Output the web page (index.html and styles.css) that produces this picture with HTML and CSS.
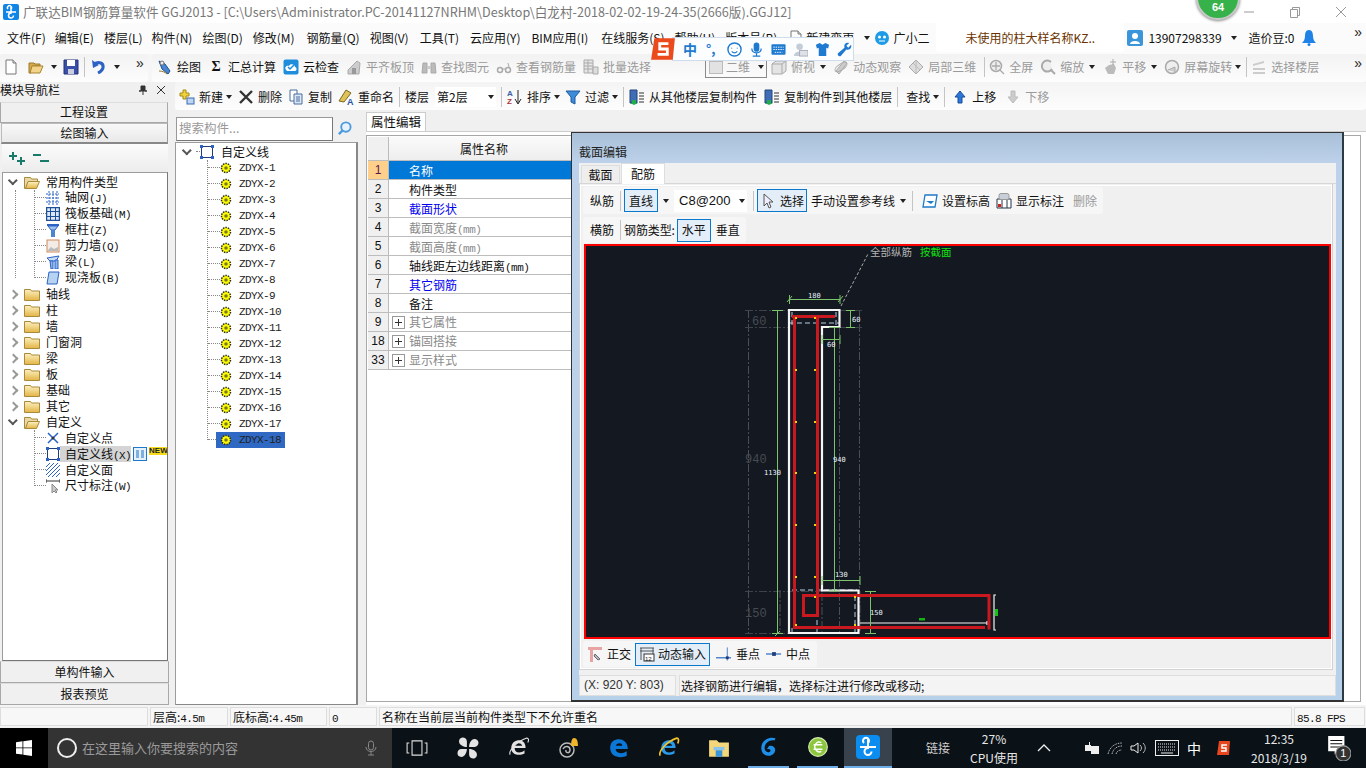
FILE: index.html
```html
<!DOCTYPE html>
<html lang="zh">
<head>
<meta charset="utf-8">
<title>GGJ2013</title>
<link rel="stylesheet" href="styles.css">
</head>
<body>
<svg class="defs" width="0" height="0">
<defs>
<symbol id="doc" viewBox="0 0 16 16"><path d="M3 1h7l3 3v11H3z" fill="#fff" stroke="#777"/><path d="M10 1v3h3" fill="#ddd" stroke="#777"/></symbol>
<symbol id="open" viewBox="0 0 16 16"><path d="M1 4h5l1 1h5v2H5L3 14H1z" fill="#d7a84a" stroke="#9a7a2c"/><path d="M4 7h11l-3 7H2z" fill="#f2d389" stroke="#a98530"/></symbol>
<symbol id="save" viewBox="0 0 16 16"><path d="M1 1h14v14H1z" fill="#3a4fa8" stroke="#223078"/><path d="M4 1h8v6H4z" fill="#fff"/><path d="M5 10h6v5H5z" fill="#c8cde0"/></symbol>
<symbol id="undo" viewBox="0 0 16 16"><path d="M3 5c5-3 10-1 9 4-1 3-3 4-5 5" fill="none" stroke="#2c62c6" stroke-width="3"/><path d="M1 1l1 8 6-3z" fill="#2c62c6"/></symbol>
<symbol id="pen" viewBox="0 0 16 16"><path d="M2 2l6 3 5 7-2 3-6-5z" fill="#4a86d0" stroke="#1f4f94"/><path d="M2 12c3 0 6 1 8 3" fill="none" stroke="#9a7a2c"/><circle cx="5" cy="4" r="2" fill="#eee" stroke="#777"/></symbol>
<symbol id="cloud" viewBox="0 0 16 16"><rect x="0.5" y="0.5" width="15" height="15" rx="2" fill="#1d8ddc"/><path d="M3 11c-2-3 1-5 3-4 1-3 6-2 6 1 2 0 2 4 0 4H4z" fill="#fff"/><path d="M5 8l2 2 4-4" fill="none" stroke="#1d8ddc" stroke-width="1.5"/></symbol>
<symbol id="align" viewBox="0 0 16 16"><path d="M2 11l9-9 3 2-1 11H2z" fill="#ccc" stroke="#aaa"/><path d="M6 9h4v6H6z" fill="#999"/></symbol>
<symbol id="binoc" viewBox="0 0 16 16"><path d="M2 4h4v10H1zM10 4h4l1 10h-5z" fill="#bbb" stroke="#aaa"/><path d="M6 7h4v3H6z" fill="#ccc"/></symbol>
<symbol id="glass" viewBox="0 0 16 16"><circle cx="4" cy="11" r="2.5" fill="none" stroke="#aaa" stroke-width="1.5"/><circle cx="12" cy="11" r="2.5" fill="none" stroke="#aaa" stroke-width="1.5"/><path d="M7 10h2M13 8l-1-4" stroke="#aaa"/></symbol>
<symbol id="batch" viewBox="0 0 16 16"><path d="M1 1h9v13H1z" fill="#e6e6e6" stroke="#aaa"/><path d="M1 4h9M1 7h9M1 10h9M5 1v13M10 8h5v7h-5z" fill="#ddd" stroke="#aaa"/></symbol>
<symbol id="box2" viewBox="0 0 16 16"><rect x="1.5" y="2.5" width="13" height="12" fill="#e2e2e2" stroke="#bbb"/></symbol>
<symbol id="box3" viewBox="0 0 16 16"><path d="M1 5l4-3h10v10l-4 3H1z" fill="#e4e4e4" stroke="#aaa"/><path d="M1 5h10v10M11 5l4-3" fill="none" stroke="#aaa"/></symbol>
<symbol id="orbit" viewBox="0 0 16 16"><path d="M3 12l8-10 3 2-8 11z" fill="#ccc" stroke="#aaa"/><ellipse cx="8" cy="8" rx="7" ry="3" fill="none" stroke="#aaa" transform="rotate(-35 8 8)"/></symbol>
<symbol id="part3" viewBox="0 0 16 16"><path d="M8 1l7 7-7 7-7-7z" fill="#ddd" stroke="#aaa"/><path d="M5 4l7 7M8 1v14" stroke="#bbb"/></symbol>
<symbol id="zoomf" viewBox="0 0 16 16"><circle cx="7" cy="7" r="5.5" fill="#eee" stroke="#aaa" stroke-width="1.5"/><path d="M7 3v8M3 7h8M11 11l4 4" stroke="#aaa" stroke-width="1.3"/></symbol>
<symbol id="zoomc" viewBox="0 0 16 16"><path d="M11 3a5.5 5.5 0 1 0 1 7" fill="#eee" stroke="#aaa" stroke-width="2"/><path d="M11 11l4 4" stroke="#aaa" stroke-width="2"/></symbol>
<symbol id="pan" viewBox="0 0 16 16"><path d="M3 9l4-3 5-1 2 4-2 6H6z" fill="#bbb"/><path d="M11 0v6M8 3h6" stroke="#aaa"/></symbol>
<symbol id="rot" viewBox="0 0 16 16"><circle cx="8" cy="8" r="6.5" fill="#eee" stroke="#aaa" stroke-width="1.5"/><path d="M4 11l7-3v5" fill="#ccc" stroke="#aaa"/></symbol>
<symbol id="layers" viewBox="0 0 16 16"><path d="M2 5l11-3v2L2 7zM2 9h12v2H2zM2 13h12v2H2z" fill="#ccc"/></symbol>
<symbol id="newp" viewBox="0 0 16 16"><path d="M4 1h3v3h3v3H7v3H4V7H1V4h3z" fill="#f2d23f" stroke="#a38a12"/><rect x="8" y="9" width="7" height="6" fill="#bcd5f2" stroke="#3a6ab0"/></symbol>
<symbol id="del" viewBox="0 0 16 16"><path d="M2 2l12 12M14 2L2 14" stroke="#333" stroke-width="2.4"/></symbol>
<symbol id="copy" viewBox="0 0 16 16"><path d="M2 1h7v11H2z" fill="#fff" stroke="#4a6c9e"/><path d="M6 5h8v10H6z" fill="#dde8f6" stroke="#4a6c9e"/><path d="M8 8h4M8 10h4M8 12h4" stroke="#4a6c9e"/></symbol>
<symbol id="ren" viewBox="0 0 16 16"><path d="M1 12l7-11 5 3-7 9z" fill="#e1c25a" stroke="#7a6a20"/><text x="9" y="15.5" font-size="9" font-weight="700" fill="#1e55a8" font-family="Liberation Sans">A</text></symbol>
<symbol id="sort" viewBox="0 0 16 16"><text x="0" y="7" font-size="8" font-weight="700" fill="#3a5fa8" font-family="Liberation Sans">A</text><text x="0" y="15" font-size="8" font-weight="700" fill="#a33" font-family="Liberation Sans">Z</text><path d="M11 1v13M8 10l3 5 3-5" fill="none" stroke="#222"/></symbol>
<symbol id="filter" viewBox="0 0 16 16"><path d="M1 2h14L10 8v7l-4-2V8z" fill="#3e8bd8" stroke="#1e5aa0"/></symbol>
<symbol id="cfrom" viewBox="0 0 16 16"><path d="M1 1h7v13H1z" fill="#3e6db6" stroke="#24477c"/><path d="M3 11h4v3h2l-4 2-4-2h2z" fill="#1fae4b"/><path d="M10 4h5M10 7h5M10 10h5M10 13h5" stroke="#333" stroke-width="1.2"/></symbol>
<symbol id="up" viewBox="0 0 16 16"><path d="M8 2l5 6h-3v6H6V8H3z" fill="#2a77d8" stroke="#1b4f9c"/></symbol>
<symbol id="down" viewBox="0 0 16 16"><path d="M8 14l5-6h-3V2H6v6H3z" fill="#ccc" stroke="#bbb"/></symbol>
<symbol id="folder" viewBox="0 0 16 16"><path d="M0.5 3.5h6l1 1.5h8v9.5H0.5z" fill="url(#fg)" stroke="#a88a3a"/></symbol>
<symbol id="fopen" viewBox="0 0 16 16"><path d="M0.5 3.5h6l1 1.5h6v3H4l-2 6.500H0.500z" fill="#ead8a6" stroke="#a88a3a"/><path d="M4 7.500h11.500l-3 7H1.500z" fill="url(#fg)" stroke="#a88a3a"/></symbol>
<linearGradient id="fg" x1="0" y1="0" x2="0" y2="1"><stop offset="0" stop-color="#fdf2c4"/><stop offset="1" stop-color="#e2b445"/></linearGradient>
<symbol id="grid" viewBox="0 0 14 14"><path d="M0 3h13M0 7h13M0 11h13M3 0v14M7 0v14M11 0v14" stroke="#2c62c6" stroke-dasharray="2 1"/></symbol>
<symbol id="raft" viewBox="0 0 14 14"><rect x="0.500" y="0.500" width="13" height="13" fill="#dce8f6" stroke="#1f4f94" stroke-width="1.500"/><path d="M0 4.500h14M0 9.500h14M4.500 0v14M9.500 0v14" stroke="#1f4f94"/></symbol>
<symbol id="col" viewBox="0 0 14 14"><path d="M1 1h12v2H1z" fill="#2c62c6"/><path d="M2 3h10l-3 4H5z" fill="#9fc2ea" stroke="#2c62c6"/><path d="M5 7h4v7H5z" fill="#4a86d0"/></symbol>
<symbol id="wall" viewBox="0 0 14 14"><rect x="1" y="1" width="12" height="12" fill="#f3ece6" stroke="#d08a5a"/><path d="M2 11l3-3 3 2 4-2v4H2z" fill="#bbb"/></symbol>
<symbol id="beam" viewBox="0 0 14 14"><path d="M1 3l12-2-3 5H4z" fill="#c9dff5" stroke="#2c62c6"/><path d="M4 6h3v8H5zM9 5h3v9H9z" fill="#8fb8e8" stroke="#2c62c6"/></symbol>
<symbol id="slab" viewBox="0 0 14 14"><path d="M3 1h10l-2 12H1z" fill="#b7d3f2" stroke="#2c62c6"/></symbol>
<symbol id="pt" viewBox="0 0 14 14"><path d="M2 2l10 10M12 2L2 12" stroke="#2c62c6" stroke-width="1.500"/><circle cx="7" cy="7" r="1.500" fill="#333"/></symbol>
<symbol id="sq" viewBox="0 0 14 14"><rect x="1.500" y="1.500" width="11" height="11" fill="none" stroke="#1f3d7a"/><path d="M0 0h3v3H0zM11 0h3v3h-3zM0 11h3v3H0zM11 11h3v3h-3z" fill="#2c62c6"/></symbol>
<symbol id="hatch" viewBox="0 0 14 14"><path d="M0 4l4-4M0 8l8-8M0 12L12 0M2 14L14 2M6 14l8-8M10 14l4-4" stroke="#2c62c6"/></symbol>
<symbol id="dim" viewBox="0 0 14 14"><path d="M0 2h14M0 0v4M14 0v4" stroke="#333"/><path d="M6 5v9l2-2 2 2 1-1-2-2h3z" fill="#ccc" stroke="#888"/></symbol>
<symbol id="gear" viewBox="0 0 12 12"><circle cx="6" cy="6" r="4.500" fill="#ff0" stroke="#2b2b20" stroke-width="1.500" stroke-dasharray="1.500 1"/><circle cx="6" cy="6" r="1.800" fill="#7d7a20"/></symbol>
<symbol id="cursor" viewBox="0 0 16 16"><path d="M4 1v12l3-3 2 5 2-1-2-5h4z" fill="#eef" stroke="#555"/></symbol>
<symbol id="setel" viewBox="0 0 16 16"><path d="M3 2h12l-2 12H1z" fill="#fff" stroke="#1e7ac8" stroke-width="1.300"/><path d="M4 8h8l-3 3z" fill="#1e7ac8"/></symbol>
<symbol id="show" viewBox="0 0 16 16"><path d="M1 6h14v9H1z" fill="#fff" stroke="#234"/><path d="M6 6v9M11 6v9" stroke="#234"/><rect x="3" y="0.500" width="10" height="6" rx="2" fill="#c9cfd8" stroke="#999"/><rect x="2" y="11" width="3" height="3" fill="#c22"/></symbol>
<symbol id="ortho" viewBox="0 0 16 16"><path d="M1 1h14v3H6v12H3V4H1z" fill="#e8a3a3"/><path d="M8 8l5 5-2 1-4-4z" fill="#bbb" stroke="#667"/></symbol>
<symbol id="dyn" viewBox="0 0 16 16"><path d="M1 2h14M1 5h14M2 2v12M14 2v12" stroke="#555"/><rect x="5" y="8" width="10" height="7" fill="#fff" stroke="#333"/><text x="6" y="14.500" font-size="6" fill="#111" font-family="Liberation Sans">12</text></symbol>
<symbol id="perp" viewBox="0 0 17 16"><path d="M0 12h16" stroke="#4a7fc8" stroke-width="1.500"/><path d="M12 1v14" stroke="#4a7fc8"/><rect x="10.500" y="10.500" width="3" height="3" fill="#1f3d7a"/></symbol>
<symbol id="midp" viewBox="0 0 17 16"><path d="M0 8h16" stroke="#4a7fc8" stroke-width="1.500"/><rect x="6.500" y="6" width="4" height="4" fill="#1f3d7a"/></symbol>
</defs>
</svg>

<header class="title">
  <svg class="app" viewBox="0 0 16 16"><rect width="16" height="16" rx="2" fill="#0f86e6"/><path d="M8 3v6a2.500 2.500 0 1 0 2.500 2.500M3 8h10M5 5a2 2 0 1 1 3 0" fill="none" stroke="#fff" stroke-width="1.500"/></svg>
  <span class="title-t">广联达BIM钢筋算量软件 GGJ2013 - [C:\Users\Administrator.PC-20141127NRHM\Desktop\白龙村-2018-02-02-19-24-35(2666版).GGJ12]</span>
  <div class="winbtns">
    <svg viewBox="0 0 12 12"><path d="M1 6h10" stroke="#999"/></svg>
    <svg viewBox="0 0 12 12"><path d="M1.500 3.500h7v8h-7zM3.500 3.500v-2h7v8h-2" fill="none" stroke="#999"/></svg>
    <svg viewBox="0 0 12 12"><path d="M1 1l10 10M11 1L1 11" stroke="#999"/></svg>
  </div>
</header>

<nav class="menu">
  <span class="mi">文件(F)</span><span class="mi">编辑(E)</span><span class="mi">楼层(L)</span><span class="mi">构件(N)</span><span class="mi">绘图(D)</span><span class="mi">修改(M)</span><span class="mi">钢筋量(Q)</span><span class="mi">视图(V)</span><span class="mi">工具(T)</span><span class="mi">云应用(Y)</span><span class="mi">BIM应用(I)</span><span class="mi">在线服务(S)</span><span class="mi">帮助(H)</span><span class="mi">版本号(B)</span>
  <span class="mi newchg"><svg class="ic"><use href="#doc"/></svg>新建变更<i class="car"></i></span>
  <span class="mi xiao"><svg class="ic" viewBox="0 0 16 16"><circle cx="8" cy="8" r="7" fill="#1d9be6"/><circle cx="5.500" cy="7" r="1.500" fill="#fff"/><circle cx="10.500" cy="7" r="1.500" fill="#fff"/><path d="M5 11h6" stroke="#fff"/></svg>广小二</span>
  <span class="notice">未使用的柱大样名称KZ..</span>
  <svg class="ic user" viewBox="0 0 16 16"><rect width="16" height="16" rx="2" fill="#3a96d8"/><circle cx="8" cy="6" r="3" fill="#fff"/><path d="M3 14c0-4 10-4 10 0z" fill="#fff"/></svg>
  <span class="phone">13907298339</span><i class="car"></i>
  <span class="beans">造价豆:0</span>
  <svg class="ic bell" viewBox="0 0 16 16"><path d="M8 0c3 0 4 3 4 6s1 5 3 7H1c2-2 3-4 3-7s1-6 4-6z" fill="#1e82e6"/><circle cx="8" cy="14.500" r="1.500" fill="#1e82e6"/></svg>
  <span class="more more-r">»</span>
</nav>

<div class="tools">
  <div class="band band-l">
    <svg class="ic"><use href="#doc"/></svg>
    <svg class="ic"><use href="#open"/></svg><i class="car"></i>
    <svg class="ic"><use href="#save"/></svg>
    <span class="sep"></span>
    <svg class="ic"><use href="#undo"/></svg><i class="car"></i>
    <span class="more">»</span>
  </div>
  <div class="band band-r">
    <span class="ti"><svg class="ic"><use href="#pen"/></svg>绘图</span>
    <span class="ti"><b class="sigma">Σ</b>汇总计算</span>
    <span class="ti"><svg class="ic"><use href="#cloud"/></svg>云检查</span>
    <span class="ti off"><svg class="ic"><use href="#align"/></svg>平齐板顶</span>
    <span class="ti off"><svg class="ic"><use href="#binoc"/></svg>查找图元</span>
    <span class="ti off"><svg class="ic"><use href="#glass"/></svg>查看钢筋量</span>
    <span class="ti off"><svg class="ic"><use href="#batch"/></svg>批量选择</span>
    <span class="combo2d off"><svg class="ic"><use href="#box2"/></svg>二维<i class="car"></i></span>
    <span class="ti off tight"><svg class="ic"><use href="#box3"/></svg>俯视</span><i class="car"></i>
    <span class="ti off"><svg class="ic"><use href="#orbit"/></svg>动态观察</span>
    <span class="ti off"><svg class="ic"><use href="#part3"/></svg>局部三维</span>
    <span class="sep"></span>
    <span class="ti off tight"><svg class="ic"><use href="#zoomf"/></svg>全屏</span>
    <span class="ti off"><svg class="ic"><use href="#zoomc"/></svg>缩放</span><i class="car"></i>
    <span class="ti off"><svg class="ic"><use href="#pan"/></svg>平移</span><i class="car"></i>
    <span class="ti off"><svg class="ic"><use href="#rot"/></svg>屏幕旋转</span><i class="car car-n"></i>
    <span class="sep"></span>
    <span class="ti off tight"><svg class="ic"><use href="#layers"/></svg>选择楼层</span>
    <span class="more more-r">»</span>
  </div>
</div>

<div class="work">
  <aside class="nav">
    <div class="nav-h"><span>模块导航栏</span><span class="pin">
      <svg viewBox="0 0 10 10"><path d="M3 1h4v5h2H1h2zM5 6v4" fill="#333" stroke="#333"/></svg>
      <svg viewBox="0 0 10 10"><path d="M1 1l8 8M9 1L1 9" stroke="#333"/></svg></span></div>
    <div class="nbtn">工程设置</div>
    <div class="nbtn nbtn-on">绘图输入</div>
    <div class="nav-tb">
      <svg viewBox="0 0 16 14"><path d="M3 1h2v3h3v2H5v3H3V6H0V4h3zM11 6h2v3h3v2h-3v3h-2v-3H8V9h3z" fill="#1a7a6a"/></svg>
      <svg viewBox="0 0 16 14"><path d="M0 3h8v2H0zM7 9h9v2H7z" fill="#1a7a6a"/></svg>
    </div>
    <div class="treebox navtree">
      <div class="r"><i class="chev dn"></i><svg class="fd"><use href="#fopen"/></svg><span>常用构件类型</span></div>
      <div class="g1"><div class="g2">
        <div class="r"><i class="cn"></i><svg class="tic"><use href="#grid"/></svg><span>轴网<em>(J)</em></span></div>
        <div class="r"><i class="cn"></i><svg class="tic"><use href="#raft"/></svg><span>筏板基础<em>(M)</em></span></div>
        <div class="r"><i class="cn"></i><svg class="tic"><use href="#col"/></svg><span>框柱<em>(Z)</em></span></div>
        <div class="r"><i class="cn"></i><svg class="tic"><use href="#wall"/></svg><span>剪力墙<em>(Q)</em></span></div>
        <div class="r"><i class="cn"></i><svg class="tic"><use href="#beam"/></svg><span>梁<em>(L)</em></span></div>
        <div class="r"><i class="cn"></i><svg class="tic"><use href="#slab"/></svg><span>现浇板<em>(B)</em></span></div>
      </div></div>
      <div class="r"><i class="chev"></i><svg class="fd"><use href="#folder"/></svg><span>轴线</span></div>
      <div class="r"><i class="chev"></i><svg class="fd"><use href="#folder"/></svg><span>柱</span></div>
      <div class="r"><i class="chev"></i><svg class="fd"><use href="#folder"/></svg><span>墙</span></div>
      <div class="r"><i class="chev"></i><svg class="fd"><use href="#folder"/></svg><span>门窗洞</span></div>
      <div class="r"><i class="chev"></i><svg class="fd"><use href="#folder"/></svg><span>梁</span></div>
      <div class="r"><i class="chev"></i><svg class="fd"><use href="#folder"/></svg><span>板</span></div>
      <div class="r"><i class="chev"></i><svg class="fd"><use href="#folder"/></svg><span>基础</span></div>
      <div class="r"><i class="chev"></i><svg class="fd"><use href="#folder"/></svg><span>其它</span></div>
      <div class="r"><i class="chev dn"></i><svg class="fd"><use href="#fopen"/></svg><span>自定义</span></div>
      <div class="g3">
        <div class="r"><i class="cn"></i><svg class="tic"><use href="#pt"/></svg><span>自定义点</span></div>
        <div class="r hl"><i class="cn"></i><svg class="tic"><use href="#sq"/></svg><span class="hlt">自定义线<em>(X)</em></span><svg class="tic list" viewBox="0 0 14 14"><rect x="0.500" y="0.500" width="13" height="13" fill="#e5f1fb" stroke="#1e7ac8"/><path d="M3 3h3v8H3zM8 3h3v8H8z" fill="#7fb0e0"/></svg><span class="newtag">NEW</span></div>
        <div class="r"><i class="cn"></i><svg class="tic"><use href="#hatch"/></svg><span>自定义面</span></div>
        <div class="r"><i class="cn"></i><svg class="tic"><use href="#dim"/></svg><span>尺寸标注<em>(W)</em></span></div>
      </div>
    </div>
    <div class="nbtn nbtn-b">单构件输入</div>
    <div class="nbtn nbtn-b">报表预览</div>
  </aside>

  <div class="right">
    <div class="tb2">
      <span class="ti"><svg class="ic"><use href="#newp"/></svg>新建</span><i class="car car-n"></i>
      <span class="ti"><svg class="ic"><use href="#del"/></svg>删除</span>
      <span class="ti"><svg class="ic"><use href="#copy"/></svg>复制</span>
      <span class="ti"><svg class="ic"><use href="#ren"/></svg>重命名</span>
      <span class="sep"></span>
      <span class="floorlab">楼层</span>
      <span class="floorsel">第2层<i class="car"></i></span>
      <span class="sep"></span>
      <span class="ti tight"><svg class="ic"><use href="#sort"/></svg>排序</span><i class="car car-n"></i>
      <span class="ti tight2"><svg class="ic"><use href="#filter"/></svg>过滤</span><i class="car car-n"></i>
      <span class="sep"></span>
      <span class="ti tight"><svg class="ic"><use href="#cfrom"/></svg>从其他楼层复制构件</span>
      <span class="ti"><svg class="ic"><use href="#cfrom"/></svg>复制构件到其他楼层</span>
      <span class="sep"></span>
      <span class="find">查找</span><i class="car car-n"></i>
      <span class="sep"></span>
      <span class="ti tight moveup"><svg class="ic"><use href="#up"/></svg>上移</span>
      <span class="ti off"><svg class="ic"><use href="#down"/></svg>下移</span>
    </div>
    <div class="panes">
      <section class="comp">
        <div class="search"><span class="sbox">搜索构件...</span>
          <svg class="sbtn" viewBox="0 0 16 16"><circle cx="9.500" cy="6.500" r="5" fill="#e8f2fb" stroke="#4a9be0" stroke-width="2"/><path d="M6 10l-4 4" stroke="#4a9be0" stroke-width="2.500"/></svg></div>
        <div class="treebox ctree">
          <div class="r"><i class="chev dn"></i><i class="cn2"></i><svg class="tic"><use href="#sq"/></svg><span class="croot">自定义线</span></div>
          <div class="g4">
            <div class="r"><i class="cn"></i><svg class="gr"><use href="#gear"/></svg><span class="zd">ZDYX-1</span></div>
            <div class="r"><i class="cn"></i><svg class="gr"><use href="#gear"/></svg><span class="zd">ZDYX-2</span></div>
            <div class="r"><i class="cn"></i><svg class="gr"><use href="#gear"/></svg><span class="zd">ZDYX-3</span></div>
            <div class="r"><i class="cn"></i><svg class="gr"><use href="#gear"/></svg><span class="zd">ZDYX-4</span></div>
            <div class="r"><i class="cn"></i><svg class="gr"><use href="#gear"/></svg><span class="zd">ZDYX-5</span></div>
            <div class="r"><i class="cn"></i><svg class="gr"><use href="#gear"/></svg><span class="zd">ZDYX-6</span></div>
            <div class="r"><i class="cn"></i><svg class="gr"><use href="#gear"/></svg><span class="zd">ZDYX-7</span></div>
            <div class="r"><i class="cn"></i><svg class="gr"><use href="#gear"/></svg><span class="zd">ZDYX-8</span></div>
            <div class="r"><i class="cn"></i><svg class="gr"><use href="#gear"/></svg><span class="zd">ZDYX-9</span></div>
            <div class="r"><i class="cn"></i><svg class="gr"><use href="#gear"/></svg><span class="zd">ZDYX-10</span></div>
            <div class="r"><i class="cn"></i><svg class="gr"><use href="#gear"/></svg><span class="zd">ZDYX-11</span></div>
            <div class="r"><i class="cn"></i><svg class="gr"><use href="#gear"/></svg><span class="zd">ZDYX-12</span></div>
            <div class="r"><i class="cn"></i><svg class="gr"><use href="#gear"/></svg><span class="zd">ZDYX-13</span></div>
            <div class="r"><i class="cn"></i><svg class="gr"><use href="#gear"/></svg><span class="zd">ZDYX-14</span></div>
            <div class="r"><i class="cn"></i><svg class="gr"><use href="#gear"/></svg><span class="zd">ZDYX-15</span></div>
            <div class="r"><i class="cn"></i><svg class="gr"><use href="#gear"/></svg><span class="zd">ZDYX-16</span></div>
            <div class="r"><i class="cn"></i><svg class="gr"><use href="#gear"/></svg><span class="zd">ZDYX-17</span></div>
            <div class="r"><i class="cn"></i><span class="zsel"><svg class="gr"><use href="#gear"/></svg><span class="zd">ZDYX-18</span></span></div>
          </div>
        </div>
      </section>
      <section class="prop">
        <div class="ptabs"><span class="ptab">属性编辑</span></div>
        <div class="pbody">
          <div class="pbox">
            <div class="ptable">
              <div class="pr ph"><span class="pn"></span><span class="pname pctr">属性名称</span></div>
              <div class="pr sel"><span class="pn">1</span><span class="pname">名称</span></div>
              <div class="pr"><span class="pn">2</span><span class="pname">构件类型</span></div>
              <div class="pr"><span class="pn">3</span><span class="pname lnk">截面形状</span></div>
              <div class="pr"><span class="pn">4</span><span class="pname dis">截面宽度<em>(mm)</em></span></div>
              <div class="pr"><span class="pn">5</span><span class="pname dis">截面高度<em>(mm)</em></span></div>
              <div class="pr"><span class="pn">6</span><span class="pname">轴线距左边线距离<em>(mm)</em></span></div>
              <div class="pr"><span class="pn">7</span><span class="pname lnk">其它钢筋</span></div>
              <div class="pr"><span class="pn">8</span><span class="pname">备注</span></div>
              <div class="pr"><span class="pn">9</span><span class="pname dis ex"><i class="plus"></i>其它属性</span></div>
              <div class="pr"><span class="pn">18</span><span class="pname dis ex"><i class="plus"></i>锚固搭接</span></div>
              <div class="pr"><span class="pn">33</span><span class="pname dis ex"><i class="plus"></i>显示样式</span></div>
            </div>
          </div>
        </div>
      </section>
    </div>
  </div>
</div>

<footer class="status">
  <span class="sc s1"></span><span class="sc s2">层高:<em>4.5m</em></span><span class="sc s3">底标高:<em>4.45m</em></span><span class="sc s4"><em>0</em></span><span class="sc s5">名称在当前层当前构件类型下不允许重名</span><span class="sc s6"><em>85.8 FPS</em></span>
</footer>

<div class="taskbar">
  <span class="start"><svg viewBox="0 0 16 16"><path d="M0 2.200l6.500-.9v6.200H0zM7.300 1.200L16 0v7.500H7.300zM0 8.300h6.500v6.300L0 13.800zM7.300 8.300H16V16l-8.700-1.200z" fill="#fff"/></svg></span>
  <span class="tsearch"><i class="cortana"></i><span class="tsearch-t">在这里输入你要搜索的内容</span>
    <svg class="tmic" viewBox="0 0 16 16"><rect x="5.500" y="1" width="5" height="9" rx="2.500" fill="none" stroke="#888"/><path d="M3 7c0 6 10 6 10 0M8 12v3M5 15h6" fill="none" stroke="#888"/></svg></span>
  <span class="tb tv"><svg viewBox="0 0 20 16"><path d="M5.500 1.500h9v13h-9zM3 3.500H1v9h2M17 3.500h2v9h-2" fill="none" stroke="#ddd"/></svg></span>
  <span class="tb"><svg viewBox="0 0 20 20"><path d="M9 9C6 9 1 7 2 3s7-3 7 1zM11 9c0-3 2-8 6-7s3 7-1 7zM11 11c3 0 8 2 7 6s-7 3-7-1zM9 11c0 3-2 8-6 7s-3-7 1-7z" fill="#e4e4e4"/></svg></span>
  <span class="tb"><svg viewBox="0 0 20 20"><path d="M3 10c0-5 4-7 7-7s6 2 6 7H6c0 5 6 5 9 2v3c-4 2-12 2-12-5zM6 8h7c-1-3-6-3-7 0z" fill="#e4e4e4"/><path d="M2 16C0 13 8 4 17 1c2 0 2 2 1 4" fill="none" stroke="#e4e4e4"/></svg></span>
  <span class="tb"><svg viewBox="0 0 22 22"><circle cx="9" cy="13" r="7" fill="none" stroke="#bbb" stroke-width="1.500"/><path d="M5 12c2-4 7-3 7 1s-5 3-4 0" fill="none" stroke="#bbb" stroke-width="1.500"/><path d="M16 1c3 0 4 3 4 8h2H11h2c0-5 1-8 3-8z" fill="#f0b428"/></svg></span>
  <span class="tb"><svg viewBox="0 0 20 20"><path d="M2 10C2 4 6 2 10 2s8 3 8 9H7c0 4 6 5 10 2v4c-6 3-15 1-15-7zM7 8h6c0-3-5-3-6 0z" fill="#0b78d8"/></svg></span>
  <span class="tb"><svg viewBox="0 0 20 20"><path d="M3 10c0-5 4-7 7-7s6 2 6 7H6c0 5 6 5 9 2v3c-4 2-12 2-12-5zM6 8h7c-1-3-6-3-7 0z" fill="#2a9be8"/><path d="M2 17C0 13 8 4 17 1c2 0 2 2 1 5" fill="none" stroke="#f2c42c" stroke-width="1.500"/></svg></span>
  <span class="tb"><svg viewBox="0 0 20 20"><path d="M1 3h7l2 2h9v13H1z" fill="#f4d77a"/><path d="M7 12h6v6H7z" fill="#3a96d8"/><path d="M5 9h10v3H5z" fill="#8cc4ec"/></svg></span>
  <span class="tb"><svg viewBox="0 0 20 20"><path d="M16 2c-6-2-13 2-13 9 0 8 9 9 12 4 2-4-1-7-5-6l-2 3c3-1 4 1 3 2-2 2-5 0-5-3 0-5 5-8 9-7z" fill="#1e8fe8"/></svg></span>
  <span class="tb"><svg viewBox="0 0 20 20"><circle cx="10" cy="10" r="8.500" fill="#8cc63f" stroke="#d8eeb0"/><path d="M6 8h8M6 12h8M13 6c-4-2-6 2-6 4s3 6 6 4" fill="none" stroke="#fff" stroke-width="1.300"/></svg></span>
  <span class="tb active"><svg viewBox="0 0 24 24"><rect width="24" height="24" rx="4" fill="#0b8df0"/><path d="M12 4v9a3.500 3.500 0 1 0 3.500 3.500M4 12h16M8 8a3 3 0 1 1 4 0" fill="none" stroke="#fff" stroke-width="2"/></svg></span>
  <span class="tray">
    <span class="link">链接</span>
    <span class="cpu"><span>27%</span><span>CPU使用</span></span>
    <svg class="tr-up" viewBox="0 0 14 8"><path d="M1 7l6-6 6 6" fill="none" stroke="#eee" stroke-width="1.300"/></svg>
    <svg class="tr-ic" viewBox="0 0 16 16"><path d="M1 5h4V2h1v3h1v6H1zM7 6h8v8H7z" fill="#eee"/></svg>
    <svg class="tr-ic" viewBox="0 0 16 16"><path d="M1 14c2-8 8-11 14-11M5 14c1-5 5-8 10-8M9 14c1-3 3-4 6-4" fill="none" stroke="#bbb" stroke-dasharray="1.500 1"/></svg>
    <svg class="tr-ic" viewBox="0 0 16 16"><path d="M1 6h3l4-3v10l-4-3H1z" fill="none" stroke="#eee"/><path d="M10 5c2 2 2 4 0 6M13 3c3 3 3 7 0 10" fill="none" stroke="#bbb"/></svg>
    <svg class="tr-kb" viewBox="0 0 24 16"><rect x="0.500" y="0.500" width="23" height="15" fill="none" stroke="#eee"/><path d="M3 4h18M3 7h18M3 10h18" stroke="#eee" stroke-dasharray="1 1"/><path d="M6 13h12" stroke="#eee"/></svg>
    <span class="ime">中</span>
    <svg class="tr-ic" viewBox="0 0 16 16"><path d="M3 1h11l-1 14H1z" fill="#e8461e"/><path d="M11 5H6v3h4v3H5" fill="none" stroke="#fff" stroke-width="1.500"/></svg>
    <span class="clock"><span>12:35</span><span>2018/3/19</span></span>
    <svg class="tr-note" viewBox="0 0 22 24"><path d="M1 1h15v14H10l-3 3v-3H1z" fill="#fff"/><path d="M3 5h11M3 8h11M3 11h11" stroke="#111"/><circle cx="15" cy="17" r="7" fill="#333" stroke="#999"/><text x="15" y="20.500" font-size="10" fill="#fff" text-anchor="middle" font-family="Liberation Sans">1</text></svg>
  </span>
</div>

<div class="badge"><span>64</span></div>

<div class="sogou">
  <svg class="s-logo" viewBox="0 0 24 24"><path d="M4 2h19l-2 20H1z" fill="#ea4a1c"/><path d="M17 7H9v5h7v5H7" fill="none" stroke="#fff" stroke-width="2.600"/></svg>
  <div class="s-bar">
    <span class="s-zh">中</span>
    <span class="s-pt">°,</span>
    <svg viewBox="0 0 16 16"><circle cx="8" cy="8" r="7" fill="#fff" stroke="#1e7ad0" stroke-width="1.500"/><path d="M5 6v1M11 6v1M5 10c2 2 4 2 6 0" stroke="#1e7ad0" fill="none" stroke-width="1.300"/></svg>
    <svg viewBox="0 0 16 16"><rect x="5" y="0.500" width="6" height="10" rx="3" fill="#1e7ad0"/><path d="M3 7c0 6 10 6 10 0M8 12v3M4 15h8" fill="none" stroke="#1e7ad0" stroke-width="1.300"/></svg>
    <svg viewBox="0 0 16 16"><rect x="0.500" y="2.500" width="15" height="11" rx="1" fill="#1e7ad0"/><path d="M2.500 5.500h11M2.500 8h11M4 11h8" stroke="#fff" stroke-dasharray="1.500 1"/></svg>
    <svg viewBox="0 0 16 16"><circle cx="7" cy="5" r="3.500" fill="#c4ccd6"/><path d="M1 15c0-6 11-6 11 0z" fill="#c4ccd6"/><rect x="7" y="9" width="9" height="6" fill="#dde2e8" stroke="#aab"/></svg>
    <svg viewBox="0 0 16 16"><path d="M5 1L1 3l1 4 2-1v9h8V6l2 1 1-4-4-2-3 2z" fill="#1e7ad0"/></svg>
    <svg viewBox="0 0 16 16"><path d="M15 3l-3 3-2-2 3-3c-3-1-6 1-5 5L1 12c-1 2 1 4 3 3l6-7c4 1 6-2 5-5z" fill="#1e7ad0"/></svg>
  </div>
</div>

<div class="dialog">
  <div class="d-title">截面编辑</div>
  <div class="d-inner">
    <div class="d-tabs"><span class="d-tab">截面</span><span class="d-tab on">配筋</span></div>
    <div class="d-frame">
      <div class="d-bar">
        <span class="db-l">纵筋</span><span class="sep"></span>
        <span class="btn w32">直线</span><i class="car"></i>
        <span class="d-combo">C8@200<i class="car"></i></span>
        <span class="sep"></span>
        <span class="btn sel-btn"><svg class="ic"><use href="#cursor"/></svg>选择</span>
        <span class="db-t1">手动设置参考线</span><i class="car"></i>
        <span class="sep"></span>
        <span class="di"><svg class="ic"><use href="#setel"/></svg>设置标高</span>
        <span class="di"><svg class="ic"><use href="#show"/></svg>显示标注</span>
        <span class="di off del-off">删除</span>
      </div>
      <div class="d-bar d-bar2">
        <span class="db-l">横筋</span><span class="sep"></span>
        <span class="db-t2">钢筋类型:</span>
        <span class="btn w32 act">水平</span>
        <span class="db-t3">垂直</span>
      </div>
      <div class="cad">
        <svg viewBox="586 246 743 391" width="743" height="391">
          <g class="gd" fill="none">
            <path d="M748.500 310v323M859.500 310v281M839.500 327v306M822 327v306M780 590v43M860 591v42"/>
            <path d="M745 310.500h44M745 327.500h44M840 310.500h24M840 327.500h24M745 591.500h80M745 633.500h44"/>
          </g>
          <g class="wd" fill="none">
            <path d="M789 323h50M792 312v16M836 312v16M792 590h65M792 628v6M817 596v38M855 596v38"/>
          </g>
          <path d="M789 310h50.500v17H822V590.500h36.500V633H789z" fill="none" stroke="#f4f4f4" stroke-width="2.200"/>
          <path d="M860 623h127M987 621v4M996 595h-2v35h2" fill="none" stroke="#f4f4f4" stroke-width="1.200"/>
          <g fill="none" stroke="#7cc36b" stroke-width="1">
            <path d="M789.500 299.500h50.500M789.500 295v9M840 295v9M787 302l5-6M838 302l5-6"/>
            <path d="M777.500 310v323M772 310.500h11M772 633.500h11M775 636l5-5"/>
            <path d="M850.500 310v17M846 310.500h9M846 327.500h9"/>
            <path d="M822 339.500h17.500M822 335v9M840 335v9"/>
            <path d="M834.500 327v264M829 327.500h11M829 591h11"/>
            <path d="M822 580.500h38M822 576v9M860 576v9"/>
            <path d="M870.500 591v42M865 591.500h11M865 633.500h11"/>
          </g>
          <path class="leader" d="M841 306l27-52" fill="none"/>
          <g fill="none" stroke="#c9181e" stroke-width="3">
            <path d="M794.500 316v311.500H985M792 316.500h43"/>
            <path d="M817.500 316v299.500h-14v-20h185.500v34"/>
          </g>
          <g fill="#f2d20c">
            <rect x="795" y="317" width="2" height="2"/><rect x="814" y="317" width="2" height="2"/>
            <rect x="795" y="369" width="2" height="2"/><rect x="814" y="369" width="2" height="2"/>
            <rect x="795" y="421" width="2" height="2"/><rect x="814" y="421" width="2" height="2"/>
            <rect x="795" y="472" width="2" height="2"/><rect x="814" y="472" width="2" height="2"/>
            <rect x="795" y="524" width="2" height="2"/><rect x="814" y="524" width="2" height="2"/>
            <rect x="795" y="576" width="2" height="2"/><rect x="814" y="576" width="2" height="2"/>
            <rect x="814" y="596" width="2" height="2"/><rect x="854" y="596" width="2" height="2"/>
            <rect x="795" y="624" width="2" height="2"/><rect x="854" y="624" width="2" height="2"/>
          </g>
          <rect x="919" y="618" width="6" height="2.500" fill="#12b412"/>
          <rect x="995" y="609" width="3" height="7" fill="#12c412"/>
          <text class="cg" x="752" y="325">60</text>
          <text class="cg" x="745" y="463">940</text>
          <text class="cg" x="745" y="617">150</text>
          <text class="cw" x="808" y="298">180</text>
          <text class="cw" x="852" y="322">60</text>
          <text class="cw" x="827" y="347">60</text>
          <text class="cw" x="833" y="462">940</text>
          <text class="cw" x="764" y="475">1130</text>
          <text class="cw" x="835" y="577">130</text>
          <text class="cw" x="870" y="615">150</text>
          <text class="cn-all" x="870" y="256">全部纵筋</text>
          <text class="cn-sec" x="920" y="256">按截面</text>
        </svg>
      </div>
      <div class="d-bot">
        <span class="di"><svg class="ic"><use href="#ortho"/></svg>正交</span>
        <span class="btn dyn-btn"><svg class="ic"><use href="#dyn"/></svg>动态输入</span>
        <span class="di"><svg class="ic"><use href="#perp"/></svg>垂点</span>
        <span class="di"><svg class="ic"><use href="#midp"/></svg>中点</span>
      </div>
    </div>
    <div class="d-status">
      <span class="ds1">(X: 920 Y: 803)</span>
      <span class="ds2">选择钢筋进行编辑，选择标注进行修改或移动;</span>
    </div>
  </div>
</div>
</body>
</html>
```

FILE: styles.css
```css
* { box-sizing: border-box; }
html, body { margin: 0; height: 768px; overflow: hidden; }
body {
  position: relative;
  width: 1366px;
  display: flex;
  flex-direction: column;
  background: #f0f0f0;
  color: #111;
  font: 12px/16px "Noto Sans CJK SC", sans-serif;
}
.defs { display: block; height: 0; }
em { font-style: normal; }
i { font-style: normal; display: inline-block; }
svg { flex: none; }
.ic { width: 16px; height: 16px; display: block; }

/* title */
.title { height: 23px; flex: none; background: #fff; display: flex; align-items: center; padding-left: 3px; }
.app { width: 16px; height: 16px; }
.title-t { margin-left: 4px; font-size: 12.6px; color: #777; white-space: nowrap; }
.winbtns { margin-left: auto; display: flex; gap: 34px; padding-right: 19px; }
.winbtns svg { width: 12px; height: 12px; }

/* menu */
.menu { height: 31px; flex: none; background: #fbfbfb; display: flex; align-items: center; padding: 0 0 2px 2px; white-space: nowrap; }
.mi { padding: 0 5px; display: flex; align-items: center; }
.mi:nth-child(2), .mi:nth-child(4) { margin-left: -1px; }
.mi:nth-child(7) { margin-left: 2px; }
.mi:nth-child(9), .mi:nth-child(10), .mi:nth-child(11) { margin-left: 1px; }
.mi:nth-child(12) { margin-left: 3px; }
.newchg { gap: 2px; margin-left: 6px; padding: 0; margin-right: 4px; }
.newchg .car { margin-left: 8px; }
.xiao { gap: 3px; padding: 0; }
.notice { background: #fff; color: #6b3300; width: 188px; height: 29px; line-height: 29px; padding-left: 29px; margin-left: 7px; border-radius: 3px; }
.user { margin-left: 3px; }
.phone { margin-left: 5px; width: 78px; }
.beans { margin-left: 11px; }
.bell { margin-left: 7px; }
.car { width: 0; height: 0; border: 3.5px solid transparent; border-top: 4px solid #222; border-bottom: 0; margin-left: 5px; flex: none; }
.car-n { margin-left: 3px; }
.more { font-size: 14px; line-height: 14px; font-family: "Liberation Sans", sans-serif; color: #222; align-self: flex-start; margin-top: 2px; }
.more-r { margin-left: auto; padding-right: 4px; }

/* toolbars */
.tools { height: 28px; flex: none; display: flex; gap: 4px; background: #f6f6f6; white-space: nowrap; }
.band { height: 28px; display: flex; align-items: center; background: linear-gradient(#f2f2f2, #fdfdfd); border-radius: 3px; padding-bottom: 2px; }
.band-l { width: 148px; padding-left: 3px; gap: 2px; }
.band-l .ic:nth-of-type(2) { margin-left: 7px; }
.band-l .ic:nth-of-type(3) { margin-left: 4px; }
.band-l .sep { margin: 0 4px 0 3px; }
.band-l .more { margin-left: 14px; }
.band-r { flex: 1; padding-left: 5px; }
.ti { display: flex; align-items: center; gap: 4px; margin-left: 8px; flex: none; }
.ti:first-child { margin-left: 0; }
.band-r .ti { margin-left: 7px; }
.band-r .ti:first-child { margin-left: 0; }
.band-r .ti.tight { margin-left: 4px; }
.off { color: #9a9a9a; }
.sigma { width: 16px; font: 700 14px/16px "Liberation Serif", serif; text-align: center; color: #111; }
.sep { width: 1px; height: 20px; background: #c4c4c4; margin: 0 5px; flex: none; }
.band-r .sep { margin: 0 0 0 8px; }
.band-r .car-n + .sep { margin-left: 5px; }
.combo2d { margin-left: 54px; width: 62px; height: 22px; border: 1px solid #8a8a8a; display: flex; align-items: center; gap: 2px; padding-left: 2px; flex: none; }
.combo2d .car { margin-left: 6px; }

.work { flex: 1; display: flex; min-height: 0; }
.nav { width: 170px; flex: none; display: flex; flex-direction: column; padding-bottom: 1px; }
.nav-h { height: 20px; flex: none; display: flex; justify-content: space-between; align-items: center; font-size: 12px; padding-bottom: 4px; }
.pin { display: flex; gap: 8px; padding-right: 4px; }
.pin svg { width: 10px; height: 10px; }
.nbtn { height: 21px; flex: none; background: #f0f0f0; border: 1px solid #a8a8a8; border-top-color: #ddd; text-align: center; line-height: 18px; margin-right: 2px; }
.nbtn-on { border-width: 1px 1px 2px; border-color: #bbb #999 #888 #bbb; background: linear-gradient(#f8f8f8, #e9e9e9); margin: 0 2px 0 1px; height: 21px; }
.nbtn-b { margin: 0 1px 0 0; height: 22px; line-height: 19px; }
.nav-tb { height: 28px; flex: none; display: flex; gap: 8px; align-items: center; padding-left: 7px; background: linear-gradient(#fbfbfb, #ececec); margin: 0 2px; }
.nav-tb svg { width: 16px; height: 14px; }

.treebox { background: #fff; border: 1px solid #9c9c9c; }
.navtree { flex: 1; margin: 0 2px 0 2px; padding-top: 1px; border-bottom-color: #777; border-right-color: #777; }
.r { height: 16px; display: flex; align-items: center; white-space: nowrap; }
.chev { width: 7px; height: 7px; border: solid #999; border-width: 0 2px 2px 0; transform: rotate(-45deg); margin: 0 6px 0 7px; flex: none; }
.chev.dn { transform: rotate(45deg) translate(-2px, -1px); border-color: #555; }
.fd { width: 16px; height: 16px; margin-left: 1px; margin-right: 6px; }
.g1 { margin-left: 12px; border-left: 1px dotted #888; padding-left: 18px; }
.g2, .g3 { border-left: 1px dotted #888; }
.g2 { height: 88px; margin-bottom: 8px; }
.g3 { margin-left: 31px; height: 56px; }
.cn { width: 11px; height: 8px; margin-bottom: 8px; border-bottom: 1px dotted #888; flex: none; }
.tic { width: 14px; height: 14px; margin-right: 5px; }
.r em { font-family: "Liberation Mono", monospace; font-size: 11px; letter-spacing: -.6px; }
.hl .tic:first-of-type { margin-right: 0; }
.hlt { background: #d4d4d4; height: 16px; padding-left: 5px; }
.list { margin: 0 0 0 2px; }
.newtag { font: 700 8px/8px "Liberation Sans", sans-serif; background: #f5dc1a; margin: -6px 0 0 2px; width: 18px; overflow: hidden; color: #222; }

/* right side */
.right { flex: 1; min-width: 0; display: flex; flex-direction: column; margin-left: 5px; }
.tb2 { height: 28px; flex: none; display: flex; align-items: center; background: linear-gradient(#f4f4f4, #fdfdfd); padding: 2px 0 0 4px; white-space: nowrap; border-radius: 3px; }
.tb2 .ti { margin-left: 6px; }
.tb2 .ti:first-child { margin-left: 0; }
.tb2 .ti.tight { margin-left: 0; }
.tb2 .ti.moveup { margin-left: 2px; }
.tb2 .ti.tight2 { margin-left: 5px; }
.tb2 .tight + .ti { margin-left: 7px; }
.tb2 .ti.off { margin-left: 9px; }
.floorsel { width: 61px; height: 20px; background: #fff; display: flex; align-items: center; padding-left: 2px; margin-left: 6px; flex: none; }
.floorsel .car { margin-left: auto; margin-right: 2px; }
.find { margin-left: 3px; }
.panes { flex: 1; display: flex; min-height: 0; }
.comp { width: 183px; flex: none; display: flex; flex-direction: column; margin-right: 8px; }
.search { height: 32px; flex: none; display: flex; align-items: flex-start; padding-top: 7px; }
.sbox { width: 157px; height: 24px; margin-left: 1px; background: #fff; border: 1px solid #999; border-right-color: #777; border-bottom-color: #777; color: #999; font-size: 12.5px; line-height: 20px; padding-left: 2px; }
.sbtn { width: 15px; height: 15px; margin: 4px 0 0 4px; }
.ctree { flex: 1; padding-top: 1px; border-right: 2px solid #888; border-bottom: 2px solid #888; }
.ctree .chev { margin-left: 8px; }
.cn2 { width: 4px; height: 8px; margin-bottom: 8px; border-bottom: 1px dotted #888; margin-left: -1px; flex: none; }
.cn2 + .tic { margin-right: 7px; }
.g4 { margin-left: 31px; border-left: 1px dotted #888; height: 280px; }
.g4 .cn { width: 12px; }
.gr { width: 12px; height: 12px; margin-right: 7px; flex: none; display: block; }
.zd { font: 11px/16px "Liberation Mono", monospace; letter-spacing: -.6px; color: #222; }
.zsel { background: #2f69c4; height: 16px; display: flex; align-items: center; padding-left: 4px; margin-left: -4px; width: 69px; }

/* property pane */
.prop { flex: 1; min-width: 0; display: flex; flex-direction: column; }
.ptabs { height: 22px; flex: none; padding-top: 2px; }
.ptab { display: inline-block; width: 60px; height: 21px; background: #fff; border: 1px solid #ccc; border-bottom: 0; text-align: center; line-height: 18px; font-size: 12.5px; }
.pbody { flex: 1; background: #fff; border-top: 1px solid #ccc; padding: 3px 5px 4px 0; margin-top: -1px; }
.pbox { height: 100%; border: 1px solid #a8a8a8; padding: 1px; }
.ptable { width: 450px; }
.pr { display: flex; height: 19px; border-bottom: 1px solid #bdbdbd; line-height: 20px; }
.ph { height: 24px; line-height: 23px; background: linear-gradient(#fafafa, #eee); }
.pn { width: 21px; flex: none; text-align: center; background: #f0f0f0; border-right: 1px solid #bbb; color: #111; font-family: "Liberation Sans", sans-serif; line-height: 18px; }
.pname { flex: 1; padding-left: 20px; white-space: nowrap; }
.pctr { padding: 0; text-align: left; margin-left: 71px; }
.pname em { font-family: "Liberation Mono", monospace; letter-spacing: -.5px; font-size: 11px; }
.lnk { color: #0000f0; }
.dis { color: #8a8a8a; }
.sel .pn { background: #ffcf8c; color: #5a1a4a; }
.sel .pname { background: #0078d7; color: #fff; }
.ex { padding-left: 3px; display: flex; align-items: center; }
.plus { width: 13px; height: 13px; border: 1px solid #999; margin-right: 4px; background: linear-gradient(#333, #333) center / 7px 1px no-repeat, linear-gradient(#333, #333) center / 1px 7px no-repeat, #fff; }

/* status */
.status { height: 22px; flex: none; display: flex; gap: 2px; padding-top: 2px; background: #f4f4f4; margin-top: -1px; }
.sc { height: 19px; border: 1px solid #ddd; background: #f7f7f7; line-height: 17px; white-space: nowrap; padding-left: 2px; flex: none; }
.sc em { font-family: "Liberation Mono", monospace; font-size: 11px; letter-spacing: -.6px; }
.s1 { width: 148px; }
.s2 { width: 78px; }
.s3 { width: 97px; }
.s4 { width: 48px; }
.s5 { width: 913px; }
.s6 { width: 71px; }

/* taskbar */
.taskbar { height: 40px; flex: none; margin-top: 1px; background: #0a1117; display: flex; align-items: stretch; color: #e8e8e8; }
.start { width: 48px; background: #000; display: flex; align-items: center; justify-content: center; flex: none; }
.start svg { width: 16px; height: 16px; }
.tsearch { width: 344px; background: #333; display: flex; align-items: center; padding-left: 9px; color: #9a9a9a; font-size: 13px; flex: none; }
.cortana { width: 20px; height: 20px; border: 2.500px solid #eee; border-radius: 50%; flex: none; margin-right: 5px; }
.tsearch-t { flex: 1; }
.tmic { width: 16px; height: 16px; margin-right: 13px; }
.tb { width: 50px; display: flex; align-items: center; justify-content: center; flex: none; }
.tb svg { width: 22px; height: 22px; }
.tb:nth-child(4) { margin-left: 1px; }
.tb:nth-child(5) { margin-left: 1px; }
.tb:nth-child(10), .tb:nth-child(11) { width: 41px; margin: 0 4px; border-bottom: 2px solid #6eaee8; }
.tb.active { width: 48px; margin: 0 0 0 2px; background: #37424c; border-bottom: 2px solid #6eaee8; }
.tb.active svg { width: 24px; height: 24px; }
.tray { flex: 1; display: flex; align-items: center; padding-left: 34px; font-size: 12px; min-width: 0; }
.link { width: 36px; color: #cfcfcf; }
.cpu, .clock { display: flex; flex-direction: column; align-items: center; line-height: 19px; flex: none; }
.cpu { width: 60px; margin-left: 2px; }
.tr-up { width: 14px; height: 8px; margin: 0 33px 0 13px; }
.tr-ic { width: 16px; height: 16px; margin-right: 7px; }
.tr-kb { width: 24px; height: 16px; margin: 0 8px 0 2px; }
.ime { width: 16px; margin-right: 13px; font-size: 14px; color: #fff; flex: none; }
.clock { width: 60px; margin-left: 10px; }
.tr-note { width: 24px; height: 26px; margin-left: 18px; }

/* overlays */
.badge { position: absolute; left: 1196px; top: -24px; width: 44px; height: 44px; border-radius: 50%; background: #37b24a; border: 2px solid #c9c9c9; box-shadow: 0 1px 3px #888; color: #fff; display: flex; align-items: flex-end; justify-content: center; font: 700 11px/14px "Liberation Sans", sans-serif; padding-bottom: 4px; }
.sogou { position: absolute; left: 650px; top: 36px; display: flex; align-items: center; }
.s-logo { width: 26px; height: 26px; margin-right: -4px; position: relative; z-index: 1; }
.s-bar { width: 182px; height: 24px; background: #fbfdff; border: 1px solid #cfdcec; display: flex; align-items: center; gap: 7px; padding-left: 10px; }
.s-bar svg { width: 15px; height: 15px; }
.s-zh { color: #1e7ad0; font-weight: 700; font-size: 14px; width: 16px; }
.s-pt { color: #1e7ad0; font-weight: 700; width: 14px; font-size: 13px; }

.dialog { position: absolute; left: 571px; top: 132px; width: 773px; height: 570px; border: 1px solid #333; border-width: 1px 2px 2px 1px; border-right-color: #2c3a42; background: linear-gradient(#a8c0d8 0, #bdd2ea 30px, #b8d1ea 100%); padding: 0 6px 0 7px; display: flex; flex-direction: column; }
.d-title { height: 30px; flex: none; padding-top: 11px; line-height: 16px; color: #222; font-size: 12px; }
.d-inner { flex: 1; background: #f0f0f0; display: flex; flex-direction: column; margin-bottom: 5px; }
.d-tabs { height: 21px; flex: none; display: flex; align-items: flex-end; padding-left: 2px; border-bottom: 1px solid #d6d6d6; }
.d-tab { width: 39px; height: 18px; text-align: center; line-height: 17px; border: 1px solid #ddd; border-bottom: 0; background: #eee; }
.d-tab.on { width: 44px; height: 21px; line-height: 19px; background: #fff; margin-left: 1px; margin-bottom: -1px; border-bottom: 0; }
.d-frame { height: 486px; flex: none; margin-right: 3px; border: 1px solid #d2d2d2; border-top: 0; display: flex; flex-direction: column; padding: 3px 2px 2px; outline: 1px solid #fff; outline-offset: -2px; }
.d-bar { height: 27px; flex: none; width: 520px; margin-left: 1px; background: #f6f6f6; display: flex; align-items: center; padding-left: 7px; border-radius: 3px; white-space: nowrap; }
.d-bar .sep { margin: 0 3px 0 6px; }
.d-bar2 { width: 163px; height: 26px; margin-top: 3px; margin-bottom: 1px; }
.btn { height: 23px; border: 1px solid #0a78cc; background: #e4eef8; display: flex; align-items: center; justify-content: center; flex: none; }
.w32 { width: 34px; }
.d-combo { width: 73px; height: 22px; background: #fff; margin-left: 5px; display: flex; align-items: center; padding-left: 5px; font: 13px "Liberation Sans", sans-serif; flex: none; }
.d-combo .car { margin-left: auto; margin-right: 2px; }
.sel-btn { width: 50px; gap: 4px; }
.db-t1 { margin-left: 4px; }
.di { display: flex; align-items: center; gap: 4px; margin-left: 6px; flex: none; }
.del-off { margin-left: 9px; }
.db-t2 { letter-spacing: -.1px; }
.db-t2 + .btn { margin-left: 2px; }
.db-t3 { margin-left: 5px; }
.cad { width: 747px; height: 395px; flex: none; background: #141820; border: 2px solid #f00; margin-left: 2px; }
.cad svg { display: block; overflow: visible; }
.gd path { stroke: #3e434b; stroke-dasharray: 8 2 2 2; }
.gd path:first-child { stroke: #4a4e55; }
.wd path { stroke: #b6cde4; stroke-dasharray: 5 3; }
.leader { stroke: #aaa; stroke-dasharray: 3 2; }
.cw { font: 7px "DejaVu Sans Mono", monospace; fill: #eaf2ff; }
.cg { font: 12px "Liberation Mono", monospace; fill: #474b52; }
.cn-all { font: 10.5px "Noto Sans CJK SC", sans-serif; fill: #b4b4b4; }
.cn-sec { font: 10.5px "Noto Sans CJK SC", sans-serif; fill: #12e012; }
.d-bot { height: 26px; margin: 2px 0 0 1px; width: 234px; flex: none; background: #f6f6f6; display: flex; align-items: center; border-radius: 3px; }
.d-bot .di:first-child { margin-left: 4px; }
.dyn-btn { width: 75px; margin-left: 4px; gap: 3px; height: 23px; }
.d-status { height: 21px; flex: none; margin-top: 5px; display: flex; gap: 3px; }
.ds1, .ds2 { background: #f4f4f4; border: 1px solid #dedede; line-height: 19px; white-space: nowrap; padding-left: 4px; }
.ds1 { width: 97px; color: #333; font-family: "Liberation Sans", sans-serif; font-size: 12px; }
.ds2 { flex: 1; padding-left: 1px; }
```
